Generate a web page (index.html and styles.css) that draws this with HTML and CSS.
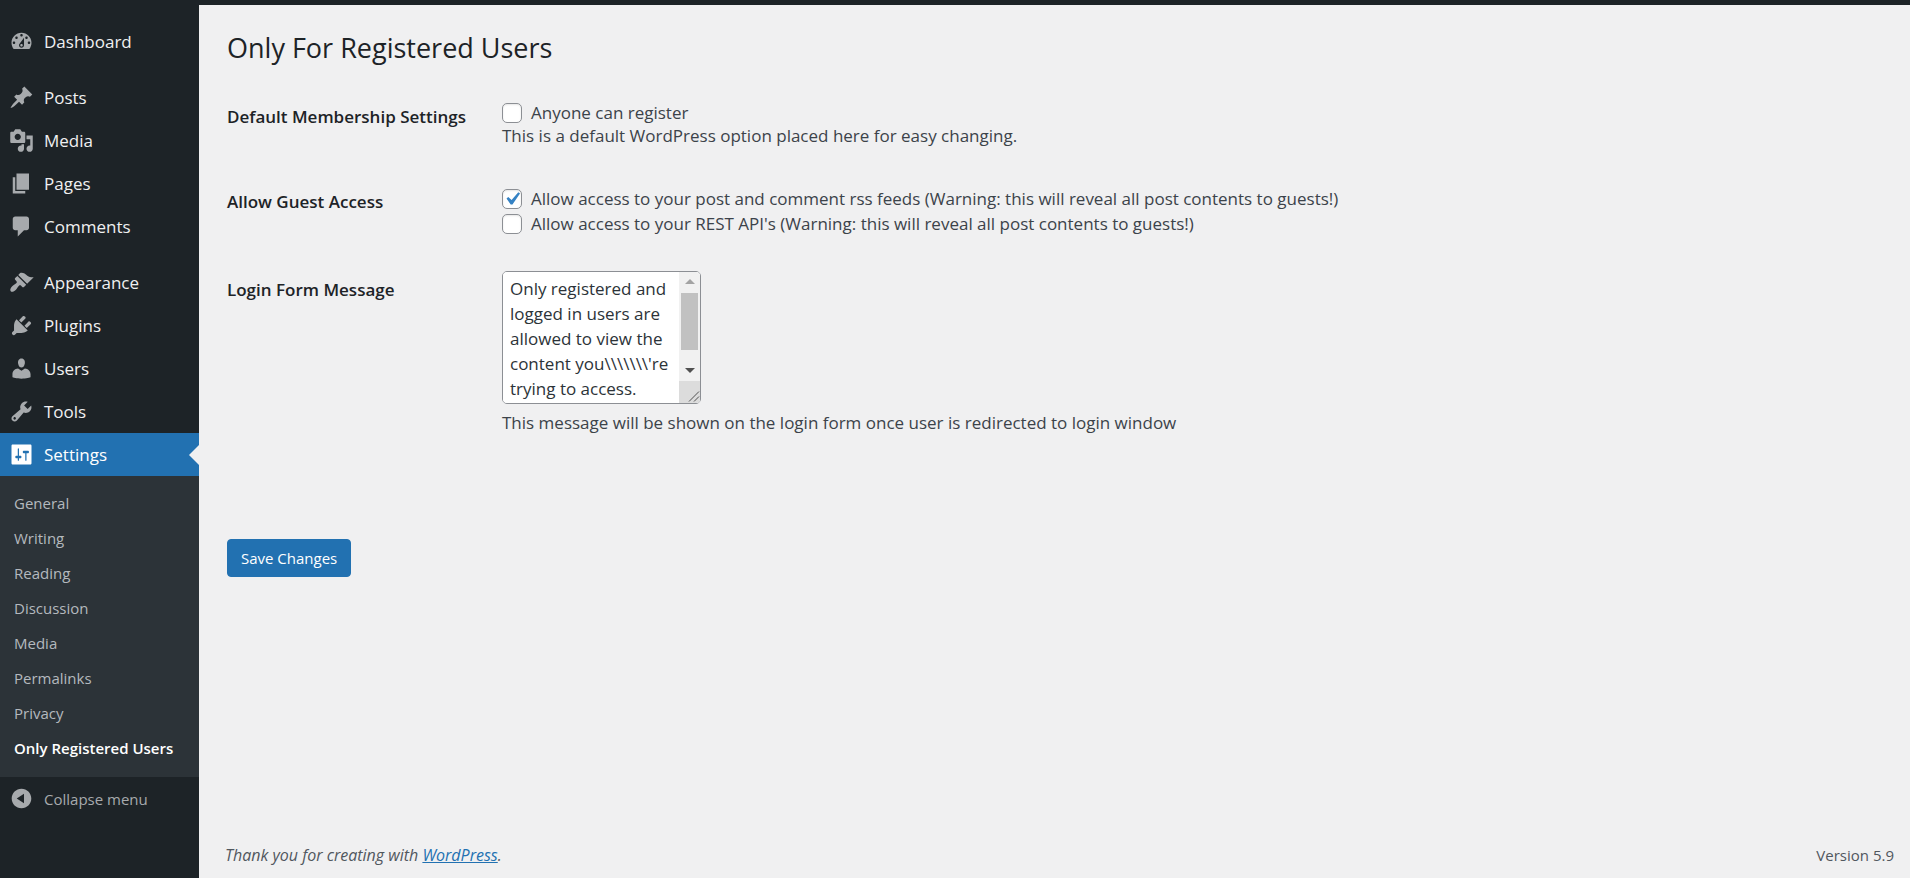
FILE: index.html
```html
<!DOCTYPE html>
<html lang="en">
<head>
<meta charset="utf-8">
<title>Only For Registered Users</title>
<link rel="stylesheet" href="styles.css">
</head>
<body>
<div class="admin-bar"></div>
<div class="layout">
  <nav class="sidebar" aria-label="Main menu">
    <ul class="menu">
      <li><a class="menu-link" href="#"><svg class="icon" viewBox="0 0 20 20"><path fill-rule="evenodd" d="M3.76 16h12.48c1.1-1.37 1.76-3.11 1.76-5 0-4.42-3.58-8-8-8s-8 3.58-8 8c0 1.89.66 3.63 1.76 5zM10 4c.55 0 1 .45 1 1s-.45 1-1 1-1-.45-1-1 .45-1 1-1zM6 6c.55 0 1 .45 1 1s-.45 1-1 1-1-.45-1-1 .45-1 1-1zm8 0c.55 0 1 .45 1 1s-.45 1-1 1-1-.45-1-1 .45-1 1-1zm-5.37 5.55L12 7v6c0 1.1-.9 2-2 2s-2-.9-2-2c0-.57.24-1.08.63-1.45zM4 10c.55 0 1 .45 1 1s-.45 1-1 1-1-.45-1-1 .45-1 1-1zm12 0c.55 0 1 .45 1 1s-.45 1-1 1-1-.45-1-1 .45-1 1-1zm-5 3c0-.55-.45-1-1-1s-1 .45-1 1 .45 1 1 1 1-.45 1-1z"/></svg>Dashboard</a></li>
      <li class="group-start"><a class="menu-link" href="#"><svg class="icon" viewBox="0 0 20 20"><path d="M10.44 3.02l1.82-1.82 6.36 6.35-1.83 1.82c-1.05-.68-2.48-.57-3.41.36l-.75.75c-.92.93-1.04 2.35-.35 3.41l-1.83 1.82-2.41-2.41-2.8 2.79c-.42.42-3.38 2.71-3.8 2.29s1.86-3.39 2.28-3.81l2.79-2.79L4.1 9.36l1.83-1.82c1.05.69 2.48.57 3.4-.36l.75-.75c.93-.92 1.05-2.35.36-3.41z"/></svg>Posts</a></li>
      <li><a class="menu-link" href="#"><svg class="icon" viewBox="0 0 20 20"><path fill-rule="evenodd" d="M13 11V4c0-.55-.45-1-1-1h-1.67L9 1H5L3.67 3H2c-.55 0-1 .45-1 1v7c0 .55.45 1 1 1h10c.55 0 1-.45 1-1zM7 4.5c1.38 0 2.5 1.12 2.5 2.5S8.38 9.5 7 9.5 4.5 8.38 4.5 7 5.62 4.5 7 4.5zM14 6h5v10.5c0 1.38-1.12 2.5-2.5 2.5S14 17.88 14 16.5s1.12-2.5 2.5-2.5c.17 0 .34.02.5.05V9h-3V6zm-4 8.05V13h2v3.5c0 1.38-1.12 2.5-2.5 2.5S7 17.88 7 16.5 8.12 14 9.5 14c.17 0 .34.02.5.05z"/></svg>Media</a></li>
      <li><a class="menu-link" href="#"><svg class="icon" viewBox="0 0 20 20"><path d="M6 15V2h10v13H6zm-1 1h8v2H3V5h2v11z"/></svg>Pages</a></li>
      <li><a class="menu-link" href="#"><svg class="icon" viewBox="0 0 20 20"><path d="M5 2h9c1.1 0 2 .9 2 2v7c0 1.1-.9 2-2 2h-2l-5 5v-5H5c-1.1 0-2-.9-2-2V4c0-1.1.9-2 2-2z"/></svg>Comments</a></li>
      <li class="group-start"><a class="menu-link" href="#"><svg class="icon" viewBox="0 0 20 20"><path d="M14.48 11.06L7.41 3.99l1.5-1.5c.5-.56 2.3-.47 3.51.32 1.21.8 1.43 1.28 2.91 2.1 1.18.64 2.45 1.26 4.45.85zm-.71.71L6.7 4.7 4.93 6.47c-.39.39-.39 1.02 0 1.41l1.06 1.06c.39.39.39 1.03 0 1.42-.6.6-1.43 1.11-2.21 1.69-.35.26-.7.53-1.01.84C1.43 14.23.4 16.08 1.4 17.07c.99 1 2.84-.03 4.18-1.36.31-.31.58-.66.85-1.02.57-.78 1.08-1.61 1.69-2.21.39-.39 1.02-.39 1.41 0l1.06 1.06c.39.39 1.02.39 1.41 0z"/></svg>Appearance</a></li>
      <li><a class="menu-link" href="#"><svg class="icon" viewBox="0 0 20 20"><path d="M13.11 4.36L9.87 7.6 8 5.73l3.24-3.24c.35-.34 1.05-.2 1.56.32.52.51.66 1.21.31 1.55zm-8 1.77l.91-1.12 9.01 9.01-1.19.84c-.71.71-2.63 1.16-3.82 1.16H6.14L4.9 17.26c-.59.59-1.54.59-2.12 0-.59-.58-.59-1.53 0-2.12l1.24-1.24v-3.88c0-1.13.4-3.19 1.09-3.89zm7.26 3.97l3.24-3.24c.34-.35 1.04-.21 1.55.31.52.51.66 1.21.31 1.55l-3.24 3.25z"/></svg>Plugins</a></li>
      <li><a class="menu-link" href="#"><svg class="icon" viewBox="0 0 20 20"><path d="M10 9.25c-2.27 0-2.73-3.44-2.73-3.44C7 4.02 7.82 2 9.97 2c2.16 0 2.98 2.02 2.71 3.81 0 0-.41 3.44-2.68 3.44zm0 2.57L12.72 10c2.39 0 4.52 2.33 4.52 4.53v2.49s-3.65 1.13-7.24 1.13c-3.65 0-7.24-1.13-7.24-1.13v-2.49c0-2.25 1.94-4.48 4.47-4.48z"/></svg>Users</a></li>
      <li><a class="menu-link" href="#"><svg class="icon" viewBox="0 0 20 20"><path fill-rule="evenodd" d="M16.68 9.77c-1.34 1.34-3.3 1.67-4.95.99l-5.41 6.52c-.99.99-2.59.99-3.58 0s-.99-2.59 0-3.57l6.52-5.42c-.68-1.65-.35-3.61.99-4.95 1.28-1.28 3.12-1.62 4.72-1.06l-2.89 2.89 2.82 2.82 2.86-2.87c.53 1.58.18 3.39-1.08 4.65zM3.81 16.21c.4.39 1.04.39 1.43 0 .4-.4.4-1.04 0-1.43-.39-.4-1.03-.4-1.43 0-.39.39-.39 1.03 0 1.43z"/></svg>Tools</a></li>
      <li>
        <a class="menu-link current" href="#"><svg class="icon" viewBox="0 0 20 20"><path fill-rule="evenodd" d="M18 17V3c0-.55-.45-1-1-1H3c-.55 0-1 .45-1 1v14c0 .55.45 1 1 1h14c.55 0 1-.45 1-1zM8 11h1c.55 0 1 .45 1 1s-.45 1-1 1H8v1.5c0 .28-.22.5-.5.5s-.5-.22-.5-.5V13H6c-.55 0-1-.45-1-1s.45-1 1-1h1V5.5c0-.28.22-.5.5-.5s.5.22.5.5V11zm5-2h-1c-.55 0-1-.45-1-1s.45-1 1-1h3c.55 0 1 .45 1 1s-.45 1-1 1h-1v5.5c0 .28-.22.5-.5.5s-.5-.22-.5-.5V9z"/></svg>Settings</a>
        <ul class="submenu">
          <li><a class="submenu-link" href="#">General</a></li>
          <li><a class="submenu-link" href="#">Writing</a></li>
          <li><a class="submenu-link" href="#">Reading</a></li>
          <li><a class="submenu-link" href="#">Discussion</a></li>
          <li><a class="submenu-link" href="#">Media</a></li>
          <li><a class="submenu-link" href="#">Permalinks</a></li>
          <li><a class="submenu-link" href="#">Privacy</a></li>
          <li><a class="submenu-link active" href="#" aria-current="page">Only Registered Users</a></li>
        </ul>
      </li>
    </ul>
    <button class="collapse" type="button"><svg class="icon" viewBox="0 0 20 20"><path fill-rule="evenodd" d="M10 2.16c4.33 0 7.84 3.51 7.84 7.84s-3.51 7.84-7.84 7.84S2.16 14.33 2.16 10 5.67 2.16 10 2.16zm2 11.72V6.12L6.18 9.97z"/></svg>Collapse menu</button>
  </nav>
  <div class="content">
    <main>
      <h1 class="title">Only For Registered Users</h1>
      <form class="settings">
        <div class="row" role="group" aria-labelledby="membership">
          <div class="row-label" id="membership">Default Membership Settings</div>
          <div class="row-field checks">
            <label class="check compact"><input type="checkbox">Anyone can register</label>
            <p>This is a default WordPress option placed here for easy changing.</p>
          </div>
        </div>
        <div class="row" role="group" aria-labelledby="guest">
          <div class="row-label" id="guest">Allow Guest Access</div>
          <div class="row-field checks">
            <label class="check"><input type="checkbox" checked>Allow access to your post and comment rss feeds (Warning: this will reveal all post contents to guests!)</label>
            <label class="check"><input type="checkbox">Allow access to your REST API's (Warning: this will reveal all post contents to guests!)</label>
          </div>
        </div>
        <div class="row">
          <label class="row-label" for="message">Login Form Message</label>
          <div class="row-field">
            <div class="message-box">
              <textarea class="message" id="message">Only registered and logged in users are allowed to view the content you\\\\\\\'re trying to access.
</textarea>
              <div class="scrollbar" aria-hidden="true">
                <svg class="scroll-arrow" viewBox="0 0 21 21"><path d="M6 12l5-5 5 5z" fill="#a3a3a3"/></svg>
                <div class="scroll-thumb"></div>
                <svg class="scroll-arrow" viewBox="0 0 21 21"><path d="M6 8h10l-5 5z" fill="#505050"/></svg>
                <svg class="resizer" viewBox="0 0 21 21"><path d="M10 20L20 10M15 20l5-5" stroke="#505050" fill="none"/></svg>
              </div>
            </div>
            <p class="note">This message will be shown on the login form once user is redirected to login window</p>
          </div>
        </div>
        <button class="save" type="button">Save Changes</button>
      </form>
    </main>
    <footer class="footer">
      <p class="thanks">Thank you for creating with <a href="#">WordPress</a>.</p>
      <p class="version">Version 5.9</p>
    </footer>
  </div>
</div>
</body>
</html>
```
FILE: styles.css
```css
* {
  box-sizing: border-box;
}

body {
  margin: 0;
  min-height: 100vh;
  display: flex;
  flex-direction: column;
  background: #f0f0f1;
  color: #3c434a;
  font-family: "Open Sans", "Noto Sans", sans-serif;
  font-size: 17px;
  line-height: 24px;
}

p,
ul {
  margin: 0;
  padding: 0;
  list-style: none;
}

.admin-bar {
  height: 5px;
  background: #1d2327;
}

.layout {
  flex: 1;
  display: flex;
}

/* Sidebar */
.sidebar {
  flex: 0 0 199px;
  padding-top: 15px;
  background: #1d2327;
}

.group-start {
  margin-top: 13px;
}

.menu-link,
.collapse {
  display: flex;
  align-items: center;
  gap: 10px;
  height: 43px;
  padding-left: 9px;
  color: #f0f0f1;
  text-decoration: none;
}

.icon {
  width: 25px;
  height: 25px;
  fill: #a7aaad;
}

.menu-link.current {
  position: relative;
  background: #2271b1;
  color: #fff;
}

.menu-link.current .icon {
  fill: #fff;
}

.menu-link.current::after {
  content: "";
  position: absolute;
  right: 0;
  top: 50%;
  margin-top: -10px;
  border: 10px solid transparent;
  border-left-width: 0;
  border-right-color: #f0f0f1;
}

.submenu {
  padding: 9px 0 12px;
  background: #2c3338;
}

.submenu-link {
  display: flex;
  align-items: center;
  height: 35px;
  padding-left: 14px;
  color: #b4b9be;
  font-size: 15px;
  text-decoration: none;
  white-space: nowrap;
}

.submenu-link.active {
  color: #fff;
  font-weight: 600;
}

.collapse {
  width: 100%;
  border: 0;
  background: none;
  color: #a7aaad;
  font-family: inherit;
  font-size: 15px;
}

/* Content */
.content {
  flex: 1;
  display: flex;
  flex-direction: column;
  padding: 24px 16px 11px 28px;
}

.title {
  margin: 0;
  color: #1d2327;
  font-size: 27px;
  font-weight: 400;
  line-height: 38px;
}

.settings {
  padding-top: 16px;
}

.row {
  display: grid;
  grid-template-columns: 275px 1fr;
}

.row-label {
  padding-top: 22px;
  color: #1d2327;
  font-size: 17px;
  font-weight: 600;
}

.row-field {
  padding: 15px 0 20px;
}

.row-field.checks {
  padding-top: 18px;
}

.check {
  display: flex;
  align-items: center;
  gap: 9px;
  height: 25px;
}

.check.compact {
  height: 23px;
}

.check input {
  appearance: none;
  width: 20px;
  height: 20px;
  margin: 0;
  border: 1px solid #8c8f94;
  border-radius: 5px;
  background: #fff center / 26px no-repeat;
  box-shadow: inset 0 1px 2px rgba(0, 0, 0, 0.1);
}

.check input:checked {
  background-image: url("data:image/svg+xml,%3Csvg xmlns='http://www.w3.org/2000/svg' viewBox='0 0 20 20'%3E%3Cpath d='M14.83 4.89l1.34.94-5.81 8.38H9.02L5.78 9.67l1.34-1.25 2.57 2.4z' fill='%233582c4'/%3E%3C/svg%3E");
}

.message-box {
  position: relative;
  width: 199px;
}

.message {
  display: block;
  width: 100%;
  height: 133px;
  padding: 4px 22px 4px 7px;
  border: 1px solid #8c8f94;
  border-radius: 5px;
  background: #fff;
  color: #2c3338;
  font-family: inherit;
  font-size: 17px;
  line-height: 25px;
  resize: none;
}

/* Scrollbar laid over the right edge of the message box */
.scrollbar {
  position: absolute;
  inset: 1px 1px 1px auto;
  width: 21px;
  display: flex;
  flex-direction: column;
  border-radius: 0 4px 4px 0;
  background: #f1f1f1;
  overflow: hidden;
  pointer-events: none;
}

.scroll-arrow,
.resizer {
  flex: none;
  width: 21px;
  height: 21px;
}

.scroll-thumb {
  height: 57px;
  margin: 0 2px auto;
  background: #c1c1c1;
}

.resizer {
  height: 22px;
  background: #dcdcdc;
}

.note {
  margin-top: 7px;
}

.save {
  margin-top: 84px;
  height: 38px;
  padding: 0 13px;
  border: 1px solid #2271b1;
  border-radius: 4px;
  background: #2271b1;
  color: #fff;
  font-family: inherit;
  font-size: 15px;
}

/* Footer */
.footer {
  display: flex;
  justify-content: space-between;
  margin: auto 0 0 -2px;
  color: #50575e;
  font-size: 15px;
}

.thanks {
  font-size: 16px;
  font-style: italic;
}

.thanks a {
  color: #2271b1;
}
```
